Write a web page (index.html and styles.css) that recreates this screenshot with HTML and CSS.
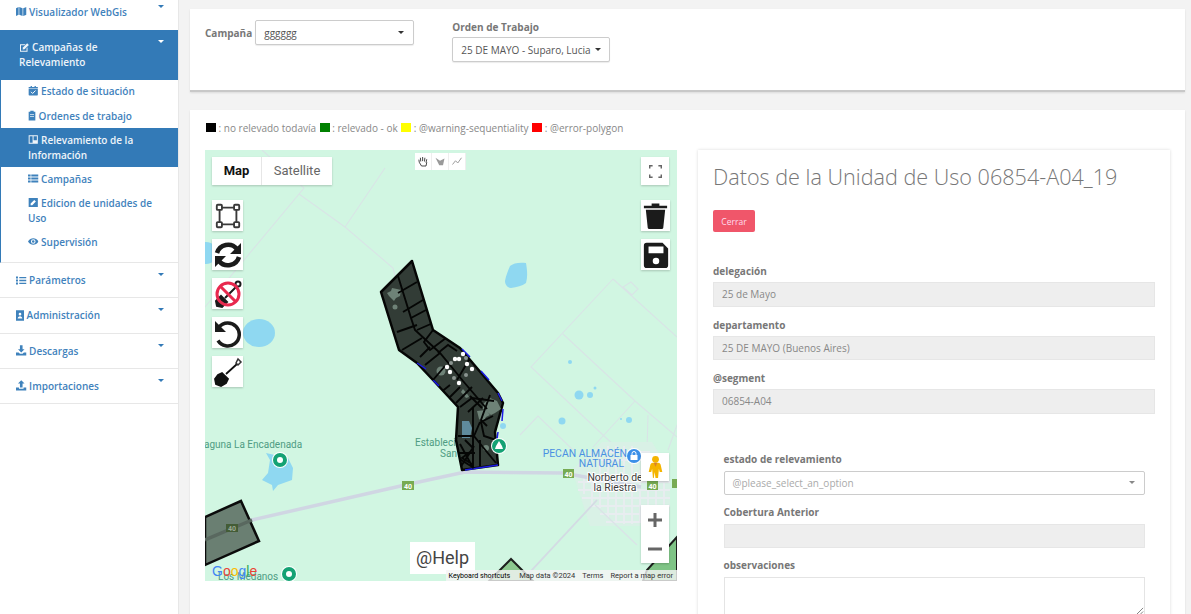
FILE: index.html
```html
<!DOCTYPE html>
<html lang="es">
<head>
  <meta charset="UTF-8">
  <meta name="viewport" content="width=device-width, initial-scale=1.0">
  <title>Campañas de Relevamiento</title>
  <link rel="stylesheet" href="styles.css">
</head>
<body>
  <svg class="defs" aria-hidden="true">
    <symbol id="i-map" viewBox="0 0 16 16"><path d="M0 3l4-2v12l-4 2zM5 1l5 2v12l-5-2zM11 3l5-2v12l-5 2z"/></symbol>
    <symbol id="i-edit" viewBox="0 0 16 16"><path d="M2 3h8L8.500 4.500H3v8.500h8.500V9L13 7.500V14.500H1.500V3z"/><path d="M6 8l6.500-6.500 2.500 2.500L8.500 10.500 5.500 11z"/></symbol>
    <symbol id="i-cal" viewBox="0 0 16 16"><path d="M1 5h14v9.500a1 1 0 0 1-1 1H2a1 1 0 0 1-1-1zM1 2.500h3V1h2v1.500h4V1h2v1.500h3V4H1z"/><path d="M4.500 10l2.500 2.500 4.500-4.500" fill="none" stroke="#fff" stroke-width="1.500"/></symbol>
    <symbol id="i-clip" viewBox="0 0 12 16"><path d="M1 2.500h2.500V1h5v1.500H11V15.500H1z"/><path d="M3 6.500h6M3 9.500h6" stroke="#fff"/></symbol>
    <symbol id="i-panel" viewBox="0 0 16 16"><path fill-rule="evenodd" d="M1 1.500h14v13H1zM2.500 3v10h4.500V3zM8.500 3v6h5V3z"/></symbol>
    <symbol id="i-list" viewBox="0 0 16 16"><path d="M0 2h4v3H0zM5 2h11v3H5zM0 6.500h4v3H0zM5 6.500h11v3H5zM0 11h4v3H0zM5 11h11v3H5z"/></symbol>
    <symbol id="i-pen" viewBox="0 0 16 16"><path fill-rule="evenodd" d="M1 1h14v14H1zM4 9.500V12h2.500L12 6.500 9.500 4z"/></symbol>
    <symbol id="i-eye" viewBox="0 0 16 16"><path fill-rule="evenodd" d="M0 8c2-3.500 5-5 8-5s6 1.500 8 5c-2 3.500-5 5-8 5s-6-1.500-8-5zm8 3.500a3.500 3.500 0 1 0 0-7 3.500 3.500 0 0 0 0 7zm0-1.500a2 2 0 1 1 0-4 2 2 0 0 1 0 4z"/></symbol>
    <symbol id="i-ul" viewBox="0 0 16 16"><path d="M0 2h3v3H0zM5 2.500h11v2H5zM0 6.500h3v3H0zM5 7h11v2H5zM0 11h3v3H0zM5 11.500h11v2H5z"/></symbol>
    <symbol id="i-addr" viewBox="0 0 12 16"><path fill-rule="evenodd" d="M0 0h12v16H0zM6 4a2 2 0 1 0 0 4 2 2 0 0 0 0-4zM2.500 12.500h7c0-2-1.500-3.500-3.500-3.500s-3.500 1.500-3.500 3.500z"/></symbol>
    <symbol id="i-down" viewBox="0 0 16 16"><path d="M6 0h4v6h3L8 11 3 6h3zM0 11h4l2 2h4l2-2h4v4.500H0z"/></symbol>
    <symbol id="i-up" viewBox="0 0 16 16"><path d="M8 0l5 5h-3v6H6V5H3zM0 11h4.500v2h7v-2H16v4.500H0z"/></symbol>
    <clipPath id="unit-clip"><path d="M412 261l21 69 27 18 38 45 5 10-8 29 3 33-36 5-6-30 2-33-25-27-16-17-18-13-18-58z"/></clipPath>
  </svg>

  <aside class="sidebar">
    <ul class="menu">
      <li class="menu-item first">
        <a class="menu-link"><span><svg class="ico"><use href="#i-map"/></svg> Visualizador WebGis</span><i class="caret"></i></a>
      </li>
      <li class="menu-item open">
        <a class="menu-link active"><span><svg class="ico"><use href="#i-edit"/></svg> Campañas de Relevamiento</span><i class="caret"></i></a>
        <ul class="submenu">
          <li><a><svg class="ico"><use href="#i-cal"/></svg> Estado de situación</a></li>
          <li><a><svg class="ico narrow"><use href="#i-clip"/></svg> Ordenes de trabajo</a></li>
          <li class="current"><a><svg class="ico"><use href="#i-panel"/></svg> Relevamiento de la Información</a></li>
          <li><a><svg class="ico"><use href="#i-list"/></svg> Campañas</a></li>
          <li><a><svg class="ico"><use href="#i-pen"/></svg> Edicion de unidades de Uso</a></li>
          <li><a><svg class="ico"><use href="#i-eye"/></svg> Supervisión</a></li>
        </ul>
      </li>
      <li class="menu-item">
        <a class="menu-link"><span><svg class="ico"><use href="#i-ul"/></svg> Parámetros</span><i class="caret"></i></a>
      </li>
      <li class="menu-item">
        <a class="menu-link"><span><svg class="ico narrow"><use href="#i-addr"/></svg> Administración</span><i class="caret"></i></a>
      </li>
      <li class="menu-item">
        <a class="menu-link"><span><svg class="ico"><use href="#i-down"/></svg> Descargas</span><i class="caret"></i></a>
      </li>
      <li class="menu-item">
        <a class="menu-link"><span><svg class="ico"><use href="#i-up"/></svg> Importaciones</span><i class="caret"></i></a>
      </li>
    </ul>
  </aside>

  <main class="content">
    <section class="card filters">
      <div class="filter-inline">
        <label>Campaña</label>
        <div class="dropdown dropdown-campaign"><span class="underlined">gggggg</span><i class="caret dark"></i></div>
      </div>
      <div class="filter-stacked">
        <label>Orden de Trabajo</label>
        <div class="dropdown dropdown-order"><span>25 DE MAYO - Suparo, Lucia</span><i class="caret dark"></i></div>
      </div>
    </section>

    <section class="card survey">
      <p class="legend">
        <i class="swatch black"></i> : no relevado todavía
        <i class="swatch green"></i> : relevado - ok
        <i class="swatch yellow"></i> : @warning-sequentiality
        <i class="swatch red"></i> : @error-polygon
      </p>

      <div class="survey-grid">
        <div class="map">
          <svg class="map-canvas" viewBox="205 150 472 431" width="472" height="431">
            <rect x="205" y="150" width="472" height="431" fill="#d1f6e2"/>
            <!-- minor roads -->
            <g fill="none" stroke="#d9e4e6" stroke-width="1.100">
              <path d="M262 150l42 38L205 307M299 194l46 33 48 41 2 8M345 227l40-59"/>
              <path d="M613 279l-82 88 72 68 14 13M563 334l72 67 42 36M613 279l64 58M623 287l8-5 7 7-6 6zM520 435l18-19 35 34M635 401l-42 46M648 415l-1 35M677 425l-9 25"/>
            </g>
            <!-- town -->
            <path d="M572 470l30-28h50l18 30v40l-30 14h-50z" fill="#d9f1e6"/>
            <g fill="none" stroke="#e8edf0" stroke-width="1.800">
              <path d="M578 482h92M578 490h92M582 498h88M590 506h80M600 514h62M606 522h40M584 476v18M592 474v32M600 448v60M608 446v72M616 446v76M624 446v78M632 446v78M640 470v52M648 480v40M656 480v36M664 480v30M604 452h46M600 460h44"/>
            </g>
            <path d="M597 500l-67 72-12 9" fill="none" stroke="#d4dbe4" stroke-width="1.800"/>
            <path d="M595 505l42 40" fill="none" stroke="#dbe3e8" stroke-width="1.200"/>
            <!-- water -->
            <g fill="#8fd8f1">
              <path d="M505 281c1-6 3-10 5-15 3-3 10-4 16-3 1 6 2 13 0 20-4 3-9 4-15 5-3 0-6-3-6-7z"/>
              <ellipse cx="259" cy="333" rx="16" ry="14"/>
              <circle cx="206" cy="253" r="11"/>
              <path d="M266 453l4 7-2 13-6 7 10 5 1 6 5-6 14-5 1-12-5-10z"/>
              <circle cx="503" cy="426" r="3"/>
              <circle cx="570" cy="362" r="2"/><circle cx="579" cy="395" r="4.500"/>
              <circle cx="590" cy="395" r="3"/><circle cx="595" cy="388" r="1.500"/>
              <circle cx="562" cy="421" r="3.500"/><circle cx="629" cy="420" r="3"/>
              <circle cx="621" cy="419" r="1"/>
            </g>
            <!-- main road -->
            <path d="M205 540L252 520 405 485 465 472 563 473 641 487" fill="none" stroke="#d0d6e3" stroke-width="3.500"/>
            <!-- labels under polygons -->
            <g class="map-label">
              <text x="204" y="448" class="lbl-green">aguna La Encadenada</text>
              <text x="415" y="446" class="lbl-green">Establecimiento</text>
              <text x="440" y="457" class="lbl-green">San Pablo</text>
              <text x="218" y="580" class="lbl-green">Los Médanos</text>
            </g>
            <!-- green polygons -->
            <path d="M511 559l-22 22h44z" fill="#8cc88f" stroke="#1d1f1d" stroke-width="2"/>
            <path d="M677 537l-30 33-4 11h34z" fill="#7fc486" stroke="#1d1f1d" stroke-width="2"/>
            <!-- black polygons -->
            <path d="M241 501l18 40-54 24v-48z" fill="#6a7f72" stroke="#0b0b0b" stroke-width="2.500"/>
            <path d="M205 540L252 520" stroke="#59685f" stroke-width="3.500"/>
            <path d="M412 261l21 69 27 18 38 45 5 10-8 29 3 33-36 5-6-30 2-33-25-27-16-17-18-13-18-58z" fill="#323c36" stroke="#050605" stroke-width="2.500" stroke-linejoin="round"/>
            <path d="M417 363l9 6M433 380l6 6M462 349l8 8M481 371l8 9M498 393l4 8M498 432l-2 14M465 470l33-5M503 409l-1 12" fill="none" stroke="#1c1ce6" stroke-width="1.500"/>
            <!-- parcels -->
            <g clip-path="url(#unit-clip)">
              <g fill="#6e8277">
                <path d="M387 293l4-2 1-3 5 1 4 1-1 6-4 2-2 3-5-5z"/>
                <circle cx="395" cy="307" r="2.500"/>
                <circle cx="441" cy="371" r="4.500"/>
                <path d="M483 404l7-6 7 3 4 8-6 4-4 2-8-6z"/>
                <path d="M463 389l5 6 1 2-3 1-5-6z"/>
                <path d="M477 411l9-1 4 5-4 2-3 5-4-3z"/>
                <circle cx="486" cy="448" r="3"/>
              </g>
              <path d="M462 421h7l3 7-2 10h-8z" fill="#5f8b9c"/>
              <g fill="none" stroke="#050605" stroke-width="1.900">
                <path d="M398 276l13 42 4 12 25 23 10 12 13 16 24 28"/>
                <path d="M398 293l19-11M403 312l20-12M397 332l20-7M417 330l16-7M402 350l20-12M420 357l10-10M411 318l15-8M433 330l-9 12 6 8 16-12M440 353l-15 12M433 380l12-14M450 385l-10 8M460 387l-12 12M472 387l-16 16M483 398l-15 14M470 396l12 12"/>
                <path d="M460 407l12-9 22 3M473 407v63M490 395l-9 25 6 6M493 416l-12 6 3 14 12 4M458 436h16M457 453h18M480 422l-6 14 8 10 14 17M480 440v26M458 458l16 10M460 444l12 22M465 440l8 8-9 14M470 452l-8 6 10 6M474 446l-14 22"/>
                <path d="M438 353l10-8 9 6M470 358l-13 22"/>
              </g>
            </g>
            <!-- selected vertices -->
            <g fill="#8b9490">
              <circle cx="451" cy="363" r="2"/><circle cx="466" cy="358" r="2"/>
              <circle cx="454" cy="378" r="2"/><circle cx="466" cy="375" r="2"/>
            </g>
            <g fill="#fff">
              <circle cx="447" cy="367" r="2.200"/><circle cx="450" cy="372" r="2.200"/>
              <circle cx="455" cy="359" r="2.200"/><circle cx="459" cy="359" r="2.200"/>
              <circle cx="463" cy="354" r="2.200"/><circle cx="467" cy="364" r="2.200"/>
              <circle cx="472" cy="369" r="2.200"/><circle cx="459" cy="383" r="2.200"/>
            </g>
            <!-- shields -->
            <g class="shield">
              <rect x="226" y="524" width="12" height="8" fill="#435c36"/>
              <text x="232" y="531" fill="#9aa894">40</text>
              <rect x="402" y="481" width="12" height="9" fill="#77ab53"/>
              <text x="408" y="488.500" fill="#fff">40</text>
              <rect x="563" y="469" width="11" height="9" fill="#77ab53"/>
              <text x="568.500" y="476.500" fill="#fff">40</text>
              <rect x="647" y="481" width="11" height="9" fill="#77ab53"/>
              <text x="652.500" y="488.500" fill="#fff">40</text>
              <rect x="672" y="479" width="5" height="9" fill="#77ab53"/>
            </g>
            <!-- pins -->
            <g>
              <circle cx="280" cy="460" r="8" fill="#fff"/><circle cx="280" cy="460" r="7" fill="#14a274"/><circle cx="280" cy="460" r="3" fill="#fff"/>
              <circle cx="289" cy="574" r="8" fill="#fff"/><circle cx="289" cy="574" r="7" fill="#14a274"/><circle cx="289" cy="574" r="3" fill="#fff"/>
              <circle cx="499" cy="446" r="8" fill="#fff"/><circle cx="499" cy="446" r="7" fill="#14a274"/><path d="M499 441l3 5 1 3h-8l1-3z" fill="#fff"/>
              <circle cx="634" cy="456" r="8" fill="#fff"/><circle cx="634" cy="456" r="7" fill="#3b8fe8"/><rect x="630.500" y="455" width="7" height="5" fill="#fff"/><path d="M632 455v-1.500a2 2 0 0 1 4 0V455" fill="none" stroke="#fff"/>
            </g>
            <g class="map-label">
              <text x="627" y="457" text-anchor="end" class="lbl-blue">PECAN ALMACÉN</text>
              <text x="624" y="467" text-anchor="end" class="lbl-blue">NATURAL</text>
              <text x="615" y="481" text-anchor="middle" class="lbl-dark">Norberto de</text>
              <text x="615" y="491" text-anchor="middle" class="lbl-dark">la Riestra</text>
            </g>
          </svg>

          <div class="map-type">
            <span class="map-type-on">Map</span>
            <span class="map-type-off">Satellite</span>
          </div>

          <div class="draw-tools">
            <svg viewBox="0 0 16 16"><path d="M6 14L3 9 2.500 5.500M5 8L4.500 3M7.500 7.500V2M10 8L10.500 3M12 9.500l1-4.500M6 14h6l1-5" fill="none" stroke="#333" stroke-width="1.200"/></svg>
            <svg viewBox="0 0 16 16"><path d="M2 3l6 4 6-3-2 9H7z" fill="#9a9a9a"/></svg>
            <svg viewBox="0 0 16 16"><path d="M2 12l4-5 3 3 5-7" fill="none" stroke="#9a9a9a" stroke-width="1.300"/></svg>
          </div>

          <button class="map-btn fullscreen" aria-label="Fullscreen">
            <svg viewBox="0 0 18 18" width="13" height="13"><path d="M1 5V1h4M13 1h4v4M17 13v4h-4M5 17H1v-4" fill="none" stroke="#666" stroke-width="2"/></svg>
          </button>

          <div class="tools tools-left">
            <button class="tool" aria-label="Box">
              <svg viewBox="0 0 30 30" width="28" height="28"><path d="M6 6h18v18H6z" fill="none" stroke="#3a3a3a" stroke-width="2"/><g fill="#fff" stroke="#3a3a3a" stroke-width="2"><rect x="3" y="3" width="5.500" height="5.500" rx="1"/><rect x="21.500" y="3" width="5.500" height="5.500" rx="1"/><rect x="3" y="21.500" width="5.500" height="5.500" rx="1"/><rect x="21.500" y="21.500" width="5.500" height="5.500" rx="1"/></g></svg>
            </button>
            <button class="tool" aria-label="Refresh">
              <svg viewBox="0 0 30 30" width="30" height="30"><g fill="none" stroke="#1b1b1b" stroke-width="4.500"><path d="M4 13a11.500 11.500 0 0 1 20-4"/><path d="M26 17a11.500 11.500 0 0 1-20 4"/></g><path d="M28 3v11H17zM2 27V16h11z" fill="#1b1b1b"/></svg>
            </button>
            <button class="tool" aria-label="No shovel">
              <svg viewBox="0 0 30 30" width="30" height="30"><path d="M4 27l-1-5 5-5 6 6-5 5zM12 19l11-11" fill="#1b1b1b" stroke="#1b1b1b" stroke-width="2"/><circle cx="25" cy="5" r="2.500" fill="none" stroke="#1b1b1b" stroke-width="2"/><circle cx="15" cy="15" r="11" fill="none" stroke="#e8294e" stroke-width="3"/><path d="M7.500 7.500l15 15" stroke="#e8294e" stroke-width="3"/></svg>
            </button>
            <button class="tool" aria-label="Undo">
              <svg viewBox="0 0 30 30" width="30" height="30"><path d="M6 9a11.500 11.500 0 1 1-1 13.500" fill="none" stroke="#1b1b1b" stroke-width="3.500"/><path d="M2 3v11h11z" fill="#1b1b1b"/></svg>
            </button>
            <button class="tool" aria-label="Shovel">
              <svg viewBox="0 0 30 30" width="30" height="30"><path d="M3 27l-1-5 3-4 4-2 6 6-2 4-5 3zM13 17l11-10" fill="#101010" stroke="#101010" stroke-width="1.800"/><path d="M23 6l2-4 3 3-3 3z" fill="none" stroke="#333" stroke-width="1.500"/></svg>
            </button>
          </div>

          <div class="tools tools-right">
            <button class="tool" aria-label="Delete">
              <svg viewBox="0 0 30 30" width="29" height="29"><path d="M3 5h24v2.500H3zM11 2.500h8V5h-8zM5 9h20l-2 19a1.500 1.500 0 0 1-1.500 1h-13A1.500 1.500 0 0 1 7 28z" fill="#1b1b1b"/></svg>
            </button>
            <button class="tool" aria-label="Save">
              <svg viewBox="0 0 30 30" width="28" height="28"><path fill-rule="evenodd" d="M5 2h17l6 6v18a3 3 0 0 1-3 3H5a3 3 0 0 1-3-3V5a3 3 0 0 1 3-3zM7 6v7h16V6zM15 18a3.500 3.500 0 1 0 0 7 3.500 3.500 0 0 0 0-7z" fill="#1b1b1b"/></svg>
            </button>
          </div>

          <button class="map-btn pegman" aria-label="Street View">
            <svg viewBox="0 0 20 28" width="17" height="24"><circle cx="10" cy="5" r="4" fill="#f4b400"/><path d="M4 11a3 3 0 0 1 3-2h6a3 3 0 0 1 3 2l2 9h-3l-1-4-1 11h-3l-1-7-1 7H7L6 16l-1 4H2z" fill="#f4b400"/><path d="M8 9l2 5 2-5" fill="#d9822b"/></svg>
          </button>

          <div class="zoom-control">
            <button aria-label="Zoom in"><svg viewBox="0 0 14 14" width="14" height="14"><path d="M5.500 0h3v5.500H14v3H8.500V14h-3V8.500H0v-3h5.500z" fill="#666"/></svg></button>
            <button aria-label="Zoom out"><svg viewBox="0 0 14 14" width="14" height="14"><path d="M0 5.500h14v3H0z" fill="#666"/></svg></button>
          </div>

          <div class="help">@Help</div>

          <div class="google-logo"><b class="g-blue">G</b><b class="g-red">o</b><b class="g-yellow">o</b><b class="g-blue">g</b><b class="g-green">l</b><b class="g-red">e</b></div>

          <div class="attribution">
            <span class="keys">Keyboard shortcuts</span>
            <span>Map data ©2024</span>
            <span>Terms</span>
            <span>Report a map error</span>
          </div>
        </div>

        <div class="panel">
          <h2>Datos de la Unidad de Uso 06854-A04_19</h2>
          <button class="btn-close">Cerrar</button>

          <div class="fields">
            <label>delegación</label>
            <div class="input disabled">25 de Mayo</div>
            <label>departamento</label>
            <div class="input disabled">25 DE MAYO (Buenos Aires)</div>
            <label>@segment</label>
            <div class="input disabled">06854-A04</div>
          </div>

          <div class="fields nested">
            <label>estado de relevamiento</label>
            <div class="input select"><span>@please_select_an_option</span><i class="caret gray"></i></div>
            <label>Cobertura Anterior</label>
            <div class="input disabled"></div>
            <label>observaciones</label>
            <div class="input area"><svg viewBox="0 0 10 10" width="9" height="9"><path d="M1 9l8-8M5 9l4-4" stroke="#777"/></svg></div>
          </div>
        </div>
      </div>
    </section>
  </main>
</body>
</html>
```

FILE: styles.css
```css
* {
    box-sizing: border-box;
}

html, body {
    height: 100%;
}

body {
    font-family: "Open Sans", sans-serif;
    font-size: 10px;
    background-color: #f3f3f3;
    color: #777;
    margin: 0;
    display: flex;
    height: 614px;
    overflow: hidden;
}

.defs {
    position: absolute;
    width: 0;
    height: 0;
}

ul {
    list-style: none;
    margin: 0;
    padding: 0;
}

.ico {
    width: 10.500px;
    height: 11px;
    fill: currentColor;
    vertical-align: -1.500px;
}

.ico.narrow {
    width: 8px;
}

/* sidebar */
.sidebar {
    flex: none;
    width: 179px;
    height: 614px;
    background-color: white;
    border-right: 1px solid #e7e7e7;
}

.menu-item {
    border-bottom: 1px solid #e7e7e7;
}

.menu-item.open {
    border-left: 1px solid #337ab7;
}

.menu-link {
    display: flex;
    justify-content: space-between;
    padding: 10px 14px 0 16px;
    height: 34.250px;
    align-items: flex-start;
    color: #3f82bc;
    font-size: 10px;
    font-weight: 600;
    line-height: 15px;
}

.first {
    border-bottom: 0;
}

.first .menu-link {
    height: 30px;
    padding-top: 4.500px;
}

.menu-link.active {
    height: 50px;
    margin-left: -1px;
    background-color: #337ab7;
    color: #eef4f9;
    padding: 10px 14px 0 19px;
}

.menu-link.active span {
    max-width: 110px;
}

.submenu {
    padding-bottom: 8px;
}

.submenu a {
    display: block;
    color: #3f82bc;
    font-size: 10px;
    font-weight: 600;
    line-height: 15px;
    padding: 0 12px 0 27px;
}

.submenu li {
    padding: 4.500px 0;
}

.submenu li:first-child {
    padding: 3.500px 0 5.500px;
}

.submenu li.current {
    background-color: #337ab7;
}

.submenu li.current a {
    color: #eef4f9;
}

.caret {
    flex: none;
    display: inline-block;
    width: 0;
    height: 0;
    border-left: 3px solid transparent;
    border-right: 3px solid transparent;
    border-top: 3px solid #337ab7;
}

.active .caret {
    border-top-color: white;
}

.caret.dark {
    border-top-color: #333;
}

.caret.gray {
    border-top-color: #888;
}

/* main column */
.content {
    flex: 1;
    padding: 9px 6px 0 11px;
    min-width: 0;
}

.card {
    background-color: white;
    box-shadow: 0 1px 2px rgba(0, 0, 0, 0.1);
}

.filters {
    height: 83px;
    border-bottom: 2px solid #c8c8c8;
    padding: 8px 15px 0;
    display: flex;
    align-items: flex-start;
    margin-bottom: 18px;
}

.filters label {
    font-size: 10px;
    font-weight: 700;
    color: #777;
}

.filter-inline {
    display: flex;
    align-items: center;
    gap: 3px;
    padding-top: 3px;
    margin-right: 38px;
}

.filter-stacked label {
    display: block;
    line-height: 13px;
    margin: 4px 0 3px;
}

.dropdown {
    display: flex;
    align-items: center;
    justify-content: space-between;
    height: 25px;
    background-color: white;
    border: 1px solid #ccc;
    border-radius: 2px;
    box-shadow: 0 1px 1px rgba(0, 0, 0, 0.08);
    font-size: 10px;
    color: #555;
}

.dropdown-campaign {
    width: 159px;
    padding: 0 9px 0 8px;
}

.dropdown-order {
    width: 158px;
    padding: 0 8px;
    gap: 2px;
    white-space: nowrap;
}

.underlined {
    text-decoration: underline;
}

.survey {
    height: 520px;
    padding: 12px 15px 0;
}

.legend {
    margin: 0 0 15px;
    height: 13px;
    font-size: 10px;
    line-height: 13px;
    color: #888;
    white-space: nowrap;
}

.swatch {
    display: inline-block;
    width: 10px;
    height: 9px;
    margin-left: 1px;
    vertical-align: 0;
}

.black { background-color: #000; }
.green { background-color: #008000; }
.yellow { background-color: #ff0; }
.red { background-color: #f00; }

.survey-grid {
    display: grid;
    grid-template-columns: 472px 472px;
    gap: 21px;
    align-items: start;
}

/* map */
.map {
    position: relative;
    width: 472px;
    height: 431px;
    overflow: hidden;
    font-family: Roboto, sans-serif;
}

.map-canvas {
    display: block;
}

.map-label text {
    font-family: Roboto, sans-serif;
    font-size: 10px;
}

.lbl-green {
    fill: #4f9c83;
}

.map-label .lbl-blue {
    fill: #4a90e2;
    font-size: 10.400px;
}

.map-label .lbl-dark {
    fill: #3c3c3c;
    stroke: #fff;
    stroke-width: 2px;
    paint-order: stroke;
    font-size: 10.400px;
}

.shield text {
    font-family: Roboto, sans-serif;
    font-size: 7px;
    font-weight: 700;
    text-anchor: middle;
}

.map-btn,
.tool,
.zoom-control button {
    display: flex;
    align-items: center;
    justify-content: center;
    padding: 0;
    border: none;
    background-color: white;
    box-shadow: 0 1px 2px rgba(0, 0, 0, 0.2);
}

.map-type {
    position: absolute;
    left: 7px;
    top: 7px;
    display: flex;
    height: 28px;
    background-color: white;
    box-shadow: 0 1px 2px rgba(0, 0, 0, 0.2);
    font-size: 13px;
    line-height: 28px;
}

.map-type-on {
    width: 50px;
    text-align: center;
    color: #111;
    font-weight: 700;
    border-right: 1px solid #e6e6e6;
}

.map-type-off {
    width: 70px;
    text-align: center;
    color: #666;
}

.draw-tools {
    position: absolute;
    left: 210px;
    top: 3px;
    display: flex;
    background-color: white;
}

.draw-tools svg {
    width: 17px;
    height: 17px;
    padding: 2px;
    border-right: 1px solid #eee;
}

.fullscreen {
    position: absolute;
    left: 436px;
    top: 7px;
    width: 28px;
    height: 28px;
}

.tools {
    position: absolute;
    top: 50px;
    display: flex;
    flex-direction: column;
    gap: 8px;
}

.tools-left {
    left: 7px;
}

.tools-right {
    left: 436px;
}

.tool {
    width: 31px;
    height: 31px;
}

.tools-right .tool {
    width: 29px;
}

.pegman {
    position: absolute;
    left: 436px;
    top: 303px;
    width: 28px;
    height: 28px;
}

.zoom-control {
    position: absolute;
    left: 436px;
    top: 355px;
    box-shadow: 0 1px 2px rgba(0, 0, 0, 0.2);
}

.zoom-control button {
    width: 28px;
    height: 29px;
    box-shadow: none;
}

.help {
    position: absolute;
    left: 205px;
    top: 392px;
    width: 65px;
    height: 32px;
    background-color: white;
    color: #444;
    font-size: 18px;
    line-height: 32px;
    text-align: center;
}

.google-logo {
    position: absolute;
    left: 7px;
    top: 413px;
    font-family: "Liberation Sans", sans-serif;
    font-size: 14px;
    line-height: 16px;
}

.google-logo b {
    font-weight: 400;
}

.g-blue { color: #4285f4; }
.g-red { color: #ea4335; }
.g-yellow { color: #fbbc05; }
.g-green { color: #34a853; }

.attribution {
    position: absolute;
    right: 0;
    bottom: 0;
    height: 11px;
    display: flex;
    gap: 7px;
    padding: 0 4px 0 3px;
    background-color: rgba(245, 245, 245, 0.8);
    color: #333;
    font-size: 7.500px;
    line-height: 11px;
    white-space: nowrap;
}

.keys {
    color: #000;
    font-size: 7.100px;
    margin-right: 2px;
}

/* right panel */
.panel {
    height: 470px;
    background-color: white;
    box-shadow: 0 0 3px rgba(0, 0, 0, 0.15);
    padding: 12px 15px 0;
}

.panel h2 {
    margin: 0 0 18px;
    font-size: 21.600px;
    font-weight: 300;
    line-height: 30px;
    color: #777;
    white-space: nowrap;
}

.btn-close {
    display: block;
    width: 42px;
    height: 22px;
    padding: 0;
    border: none;
    border-radius: 2px;
    background-color: #f0566a;
    color: #fde;
    font-family: "Open Sans", sans-serif;
    font-size: 8.500px;
    margin-bottom: 33px;
}

.fields label {
    display: block;
    font-size: 10px;
    font-weight: 700;
    line-height: 13px;
    color: #777;
    margin-bottom: 4px;
}

.input {
    height: 24.500px;
    padding: 0 10px;
    margin-bottom: 12px;
    font-size: 10px;
    line-height: 24px;
    color: #888;
}

.input.disabled {
    background-color: #eee;
    border: 1px solid #e6e6e6;
    line-height: 22px;
    padding: 0 8px;
}

.nested {
    padding: 0 10.500px;
    margin-top: 39px;
}

.nested label {
    margin-bottom: 5px;
}

.nested .input {
    margin-bottom: 10.500px;
}

.select {
    display: flex;
    align-items: center;
    justify-content: space-between;
    background-color: white;
    border: 1px solid #ccc;
    border-radius: 2px;
    padding: 0 9px 0 8px;
    color: #aaa;
}

.nested .input.area {
    height: 40px;
    border: 1px solid #e4e4e4;
    display: flex;
    justify-content: flex-end;
    align-items: flex-end;
    padding: 0;
}
```
